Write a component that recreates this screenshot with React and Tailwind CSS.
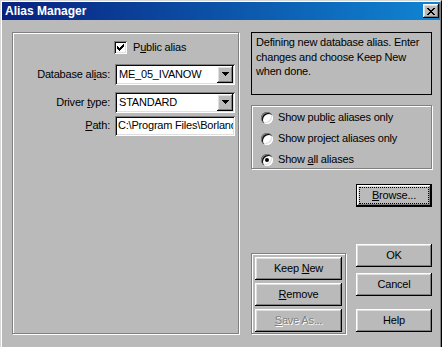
import React from 'react';

const raised = "shadow-[inset_-1px_-1px_0_#000,inset_1px_1px_0_#fff,inset_-2px_-2px_0_#808080,inset_2px_2px_0_#dfdfdf]";
const sunken = "shadow-[inset_1px_1px_0_#808080,inset_-1px_-1px_0_#fff,inset_2px_2px_0_#0a0a0a,inset_-2px_-2px_0_#dfdfdf]";
const etched = "border border-[#808080] shadow-[inset_1px_1px_0_#fff,1px_1px_0_#fff]";

const Arrow = () => (
  <svg width="7" height="4" viewBox="0 0 7 4" shapeRendering="crispEdges">
    <path d="M0 0h7v1h-7zM1 1h5v1h-5zM2 2h3v1h-3zM3 3h1v1h-1z" fill="#000" />
  </svg>
);

const Combo = ({ value }) => (
  <div className={`w-[120px] h-[21px] bg-white flex items-center pl-[4px] pr-[2px] ${sunken}`}>
    <div className="flex-1 min-w-0 whitespace-nowrap overflow-hidden">{value}</div>
    <div className={`w-[16px] h-[17px] bg-[#bababa] flex items-center justify-center ${raised}`}>
      <Arrow />
    </div>
  </div>
);

const Row = ({ label, mt, children }) => (
  <div className={`flex items-center ${mt}`}>
    <div className="w-[97px] text-right">{label}</div>
    <div className="ml-[5px]">{children}</div>
  </div>
);

const Radio = ({ checked, children }) => (
  <div className="h-[21px] flex items-center">
    <div className="w-[12px] h-[12px] rounded-full bg-white flex items-center justify-center shadow-[inset_1px_1px_0_#808080,inset_2px_2px_0_#0a0a0a,inset_-1px_-1px_0_#fff,inset_-2px_-2px_0_#dfdfdf]">
      {checked && <div className="w-[4px] h-[4px] rounded-full bg-black" />}
    </div>
    <span className="ml-[5px]">{children}</span>
  </div>
);

const Button = ({ children, disabled, className = '' }) => (
  <div className={`w-full h-[23px] bg-[#bababa] flex items-center justify-center ${raised} ${className} ${disabled ? "text-[#808080] [text-shadow:1px_1px_0_#fff]" : ""}`}>
    <span>{children}</span>
  </div>
);

const U = ({ children }) => <span className="underline underline-offset-[1px]">{children}</span>;

export default function App() {
  return (
    <div className="w-[442px] h-[347px] overflow-hidden bg-[#bababa] font-['Liberation_Sans',Arial,sans-serif] text-[11px] tracking-[-0.2px] text-black border-t border-l border-[#d8d8d8] border-r border-r-black">
      <div className="h-full border-t border-l border-white border-r border-r-[#808080]">
        {/* title bar */}
        <div className="h-[18px] flex items-center justify-between bg-[linear-gradient(to_right,#08217f,#1085d2)] pl-[3px] pr-[1px]">
          <span className="text-white font-bold text-[12px] tracking-normal">Alias Manager</span>
          <div className={`w-[16px] h-[14px] bg-[#bababa] flex items-center justify-center ${raised}`}>
            <svg width="8" height="7" viewBox="0 0 8 7" shapeRendering="crispEdges">
              <path d="M0 0h2v1h-2zM6 0h2v1h-2zM1 1h2v1h-2zM5 1h2v1h-2zM2 2h4v1h-4zM3 3h2v1h-2zM2 4h4v1h-4zM1 5h2v1h-2zM5 5h2v1h-2zM0 6h2v1h-2zM6 6h2v1h-2z" fill="#000" />
            </svg>
          </div>
        </div>

        <div className="flex pl-[10px] pt-[12px]">
          {/* left group */}
          <div className={`w-[227px] h-[302px] ${etched}`}>
            <div className="flex items-center ml-[101px] mt-[6px]">
              <div className={`w-[13px] h-[13px] bg-white flex items-center justify-center ${sunken}`}>
                <svg width="7" height="7" viewBox="0 0 7 7" shapeRendering="crispEdges">
                  <path d="M6 0h1v3h-1zM5 1h1v3h-1zM4 2h1v3h-1zM3 3h1v3h-1zM2 4h1v3h-1zM1 3h1v3h-1zM0 2h1v3h-1z" fill="#000" />
                </svg>
              </div>
              <span className="ml-[6px]">P<U>u</U>blic alias</span>
            </div>
            <Row label={<>Database al<U>i</U>as:</>} mt="mt-[8px]">
              <Combo value="ME_05_IVANOW" />
            </Row>
            <Row label={<>Driver <U>t</U>ype:</>} mt="mt-[7px]">
              <Combo value="STANDARD" />
            </Row>
            <Row label={<><U>P</U>ath:</>} mt="mt-[3px]">
              <div className={`w-[120px] h-[20px] bg-white flex items-center pl-[3px] pr-[2px] ${sunken}`}>
                <div className="flex-1 min-w-0 whitespace-nowrap overflow-hidden">C:\Program Files\Borland\Common Files</div>
              </div>
            </Row>
          </div>

          {/* right column */}
          <div className="ml-[12px] w-[181px] flex flex-col">
            <div className="h-[63px] border border-black px-[4px] pt-[2px] leading-[14.5px]">
              Defining new database alias. Enter<br />
              changes and choose Keep New<br />
              when done.
            </div>

            <div className={`mt-[10px] h-[64px] pl-[9px] pt-[1px] ${etched}`}>
              <Radio>Show publi<U>c</U> aliases only</Radio>
              <Radio>Show pro<U>j</U>ect aliases only</Radio>
              <Radio checked>Show <U>a</U>ll aliases</Radio>
            </div>

            <div className="mt-[15px] self-end w-[76px] h-[23px] border border-black">
              <div className={`w-full h-full p-[2px] ${raised}`}>
                <div className="w-full h-full border border-dotted border-black flex items-center justify-center">
                  <span><U>B</U>rowse...</span>
                </div>
              </div>
            </div>

            <div className="mt-[37px] flex justify-between items-start">
              <div className={`mt-[9px] w-[95px] h-[81px] px-[3px] pt-[3px] flex flex-col gap-[3px] ${etched}`}>
                <Button>Keep <U>N</U>ew</Button>
                <Button><U>R</U>emove</Button>
                <Button disabled><U>S</U>ave As...</Button>
              </div>
              <div className="w-[76px] flex flex-col">
                <Button>OK</Button>
                <Button className="mt-[6px]">Cancel</Button>
                <Button className="mt-[13px]">Help</Button>
              </div>
            </div>
          </div>
        </div>
      </div>
    </div>
  );
}
